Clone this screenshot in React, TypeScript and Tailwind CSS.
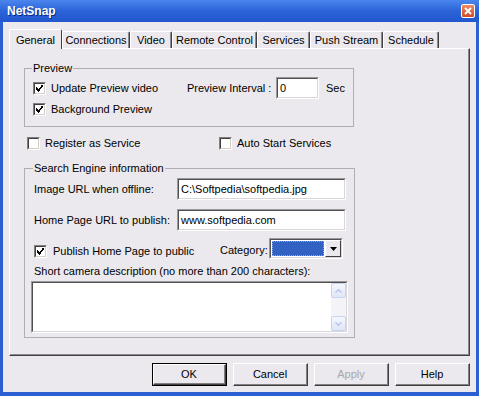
import React from "react"

function Check({ checked }: { checked?: boolean }) {
  return (
    <div className="w-[13px] h-[13px] shrink-0 border-t border-l border-[#808080] border-r border-b border-r-white border-b-white">
      <div className="w-full h-full border-t border-l border-[#404040] border-r border-b border-r-[#d4d0c8] border-b-[#d4d0c8] bg-white flex items-center justify-center">
        {checked && (
          <svg width="7" height="7" viewBox="0 0 7 7" shapeRendering="crispEdges">
            <path d="M0 2h1v1h-1zM0 3h2v1h-2zM0 4h3v1h-3zM1 5h3v1h-3zM2 6h1v1h-1zM3 4h1v1h-1zM3 3h2v1h-2zM4 2h2v1h-2zM5 1h1v1h-1zM5 0h2v1h-2zM6 1h1v1h-1z" fill="#000" />
          </svg>
        )}
      </div>
    </div>
  )
}

function Sunken({ className, children }: { className?: string; children?: React.ReactNode }) {
  return (
    <div className={`border-t border-l border-[#9a989c] border-r border-b border-r-white border-b-white ${className ?? ""}`}>
      <div className="w-full h-full border-t border-l border-[#505050] border-r border-b border-r-[#d8d6da] border-b-[#d8d6da] bg-white flex items-center pl-[2px] overflow-hidden whitespace-nowrap">
        {children}
      </div>
    </div>
  )
}

function Button({ label, isDefault, disabled }: { label: string; isDefault?: boolean; disabled?: boolean }) {
  const inner = (
    <div className="w-full h-full border-t border-l border-white border-r border-b border-r-[#404040] border-b-[#404040]">
      <div className="w-full h-full border-r border-b border-[#808080] flex items-center justify-center">
        <span className={disabled ? "text-[#a9a7ab]" : "text-black"}>{label}</span>
      </div>
    </div>
  )
  return <div className={`w-[75px] h-[23px] ${isDefault ? "border border-black" : ""}`}>{inner}</div>
}

const tabs = [
  { title: "Connections", w: "w-[68px]" },
  { title: "Video", w: "w-[42px]" },
  { title: "Remote Control", w: "w-[85px]" },
  { title: "Services", w: "w-[53px]" },
  { title: "Push Stream", w: "w-[73px]" },
  { title: "Schedule", w: "w-[56px]" },
]

export default function App() {
  return (
    <div className="w-[479px] h-[396px] bg-[#2b5fd2] flex flex-col font-['Liberation_Sans',Arial,sans-serif] text-[11px] leading-[13px] text-black overflow-hidden">
      {/* title bar */}
      <div className="h-[22px] shrink-0 flex items-center bg-gradient-to-b from-[#4b86ee] via-[#2c63d8] to-[#2257cf] pl-[7px] pr-[4px]">
        <span className="text-white font-bold text-[12px] leading-[14px] [text-shadow:1px_1px_0_#0a2a80]">NetSnap</span>
        <div className="ml-auto w-[14px] h-[14px] rounded-[2px] border border-white bg-gradient-to-b from-[#ee8a66] to-[#cf4a22] flex items-center justify-center">
          <svg width="8" height="8" viewBox="0 0 8 8">
            <path d="M1 1L7 7M7 1L1 7" stroke="#fff" strokeWidth="1.8" />
          </svg>
        </div>
      </div>

      {/* dialog body */}
      <div className="flex-1 mx-[3px] mb-[4px] bg-[#ebe9ed] flex flex-col">
        {/* tab strip */}
        <div className="mt-[7px] ml-[6px] h-[20px] flex items-end">
          <div className="relative z-10 w-[53px] h-[20px] bg-[#ebe9ed] border-t border-l border-white border-r border-r-[#404040] rounded-tl-[2px] rounded-tr-[2px] flex justify-center pt-[4px]">
            General
          </div>
          {tabs.map((t) => (
            <div
              key={t.title}
              className={`${t.w} h-[17px] mb-[1px] border-t border-l border-white border-r border-r-[#404040] rounded-tl-[2px] rounded-tr-[2px] flex justify-center pt-[2px] shadow-[inset_-1px_0_0_#8c8a8e] whitespace-nowrap`}
            >
              {t.title}
            </div>
          ))}
        </div>

        {/* tab page */}
        <div className="-mt-px ml-[6px] w-[461px] h-[308px] border-t border-l border-white border-r border-b border-r-[#404040] border-b-[#404040] flex flex-col">
          <div className="w-full h-full border-r border-b border-[#8c8a8e] flex flex-col">
            {/* Preview */}
            <fieldset className="ml-[14px] mt-[13px] w-[330px] border border-[#b0aeb4] px-[8px] pb-[7px]">
              <legend className="px-[1px] -ml-px">Preview</legend>
              <div className="flex mt-[2px]">
                <div className="w-[154px] flex flex-col">
                  <div className="h-[22px] flex items-center gap-[5px]">
                    <Check checked />
                    <span>Update Preview video</span>
                  </div>
                  <div className="h-[20px] flex items-center gap-[5px]">
                    <Check checked />
                    <span>Background Preview</span>
                  </div>
                </div>
                <div className="h-[22px] flex items-center">
                  <span className="w-[89px] whitespace-nowrap">Preview Interval :</span>
                  <Sunken className="w-[43px] h-[22px]">0</Sunken>
                  <span className="ml-[7px]">Sec</span>
                </div>
              </div>
            </fieldset>

            {/* services row */}
            <div className="mt-[10px] ml-[17px] flex h-[13px]">
              <div className="w-[192px] flex items-center gap-[5px]">
                <Check />
                <span>Register as Service</span>
              </div>
              <div className="flex items-center gap-[5px]">
                <Check />
                <span>Auto Start Services</span>
              </div>
            </div>

            {/* Search engine */}
            <fieldset className="ml-[14px] mt-[12px] w-[330px] border border-[#b0aeb4] px-[6px] pb-[4px]">
              <legend className="ml-[2px] px-[1px] -mr-px">Search Engine information</legend>
              <div className="mt-[3px] flex items-center h-[22px]">
                <span className="ml-[3px] w-[143px]">Image URL when offline:</span>
                <Sunken className="w-[169px] h-[22px]">C:\Softpedia\softpedia.jpg</Sunken>
              </div>
              <div className="mt-[9px] flex items-center h-[22px]">
                <span className="ml-[3px] w-[143px]">Home Page URL to publish:</span>
                <Sunken className="w-[169px] h-[22px]">www.softpedia.com</Sunken>
              </div>
              <div className="mt-[7px] flex items-start h-[21px]">
                <div className="ml-[3px] mt-[7px] w-[186px] flex items-center gap-[6px]">
                  <Check checked />
                  <span>Publish Home Page to public</span>
                </div>
                <span className="mt-[6px] w-[49px]">Category:</span>
                <div className="w-[74px] h-[21px] border-t border-l border-[#9a989c] border-r border-b border-r-white border-b-white">
                  <div className="w-full h-full border-t border-l border-[#505050] border-r border-b border-r-[#d8d6da] border-b-[#d8d6da] bg-white flex">
                    <div className="flex-1 m-[1px] bg-[#3161c3] border border-dotted border-[#8aa6e0]" />
                    <div className="w-[16px] border-t border-l border-white border-r border-b border-r-[#404040] border-b-[#404040] bg-[#ebe9ed] flex items-center justify-center">
                      <svg width="7" height="4" viewBox="0 0 7 4">
                        <path d="M0 0H7L3.5 4Z" fill="#000" />
                      </svg>
                    </div>
                  </div>
                </div>
              </div>
              <div className="mt-[6px] ml-[3px] whitespace-nowrap">Short camera description (no more than 200 characters):</div>
              <div className="mt-[3px] w-[317px] h-[52px] border-t border-l border-[#9a989c] border-r border-b border-r-white border-b-white">
                <div className="w-full h-full border-t border-l border-[#505050] border-r border-b border-r-[#d8d6da] border-b-[#d8d6da] bg-white flex justify-end">
                  <div className="w-[15px] h-full bg-[#f4f4f8] flex flex-col justify-between">
                    <div className="h-[15px] rounded-[2px] border border-[#c8d4f0] bg-gradient-to-b from-[#f4f7fe] to-[#dfe6f7] flex items-center justify-center">
                      <svg width="7" height="4" viewBox="0 0 7 4">
                        <path d="M0.5 3.5L3.5 0.8L6.5 3.5" stroke="#b8c6e6" strokeWidth="1.5" fill="none" />
                      </svg>
                    </div>
                    <div className="h-[15px] rounded-[2px] border border-[#c8d4f0] bg-gradient-to-b from-[#f4f7fe] to-[#dfe6f7] flex items-center justify-center">
                      <svg width="7" height="4" viewBox="0 0 7 4">
                        <path d="M0.5 0.5L3.5 3.2L6.5 0.5" stroke="#b8c6e6" strokeWidth="1.5" fill="none" />
                      </svg>
                    </div>
                  </div>
                </div>
              </div>
            </fieldset>
          </div>
        </div>

        {/* buttons */}
        <div className="mt-[7px] flex justify-end gap-[6px] pr-[6px]">
          <Button label="OK" isDefault />
          <Button label="Cancel" />
          <Button label="Apply" disabled />
          <Button label="Help" />
        </div>
      </div>
    </div>
  )
}
